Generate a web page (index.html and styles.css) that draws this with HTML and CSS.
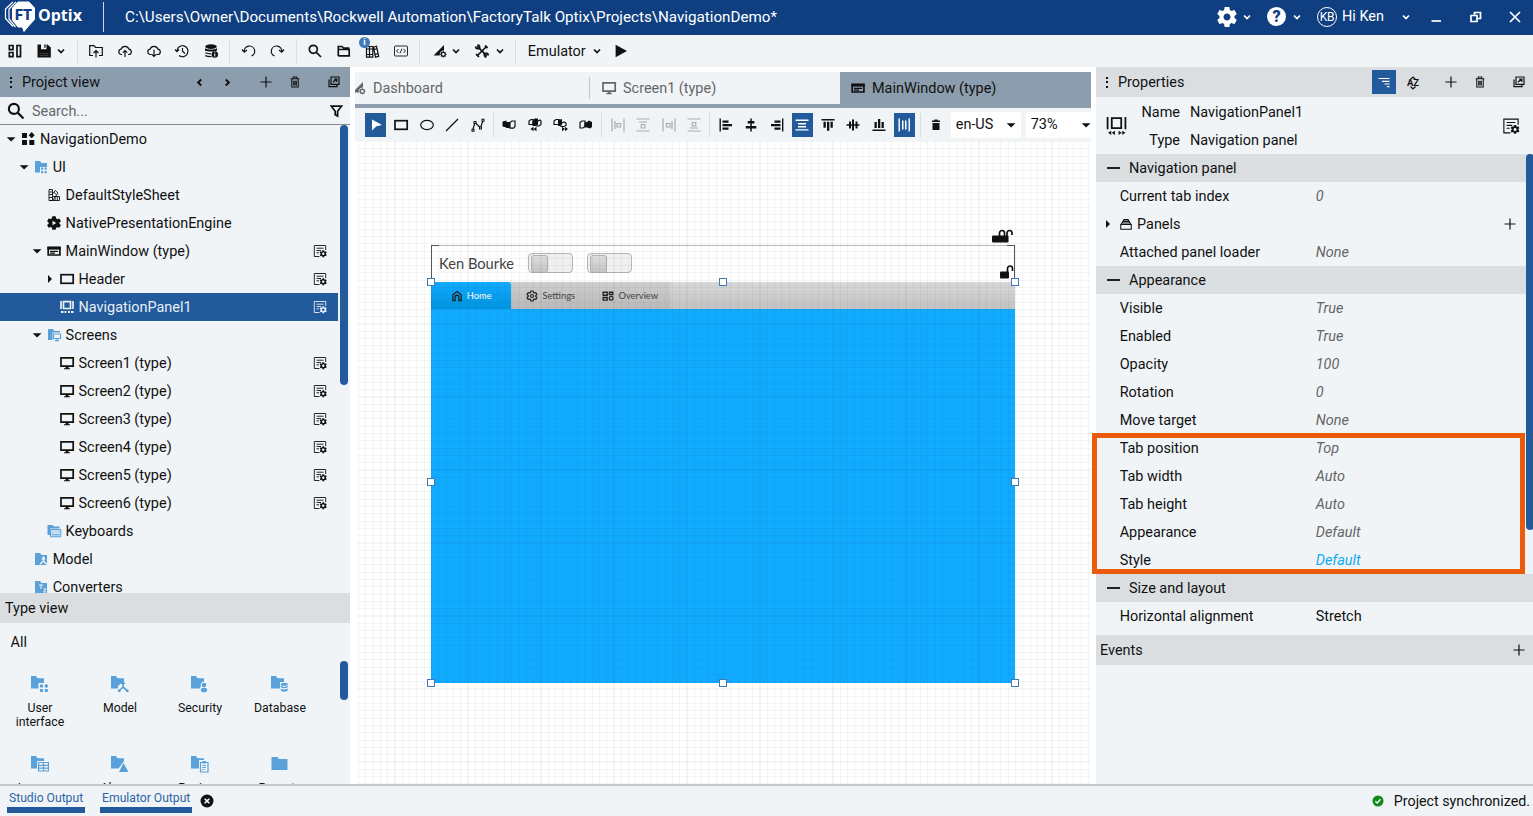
FILE: index.html
```html
<!DOCTYPE html>
<html lang="en">

<head>
  <meta charset="UTF-8" />
  <meta name="viewport" content="width=device-width, initial-scale=1.0" />
  <title>FactoryTalk Optix Studio</title>
  <link rel="stylesheet" href="styles.css">
</head>

<body>
  <!-- Icon sprite -->
  <svg class="sprite" xmlns="http://www.w3.org/2000/svg">
    <symbol id="chev" viewBox="0 0 8 8"><path class="ln2" d="M1 2.5L4 5.5L7 2.5" /></symbol>
    <symbol id="gear" viewBox="0 0 24 24"><path d="M19.43 12.98c.04-.32.07-.64.07-.98s-.03-.66-.07-.98l2.11-1.65c.19-.15.24-.42.12-.64l-2-3.46c-.12-.22-.39-.3-.61-.22l-2.49 1c-.52-.4-1.08-.73-1.69-.98l-.38-2.65C14.46 2.18 14.25 2 14 2h-4c-.25 0-.46.18-.49.42l-.38 2.65c-.61.25-1.17.59-1.69.98l-2.49-1c-.23-.09-.49 0-.61.22l-2 3.46c-.13.22-.07.49.12.64l2.11 1.65c-.04.32-.07.65-.07.98s.03.66.07.98l-2.11 1.65c-.19.15-.24.42-.12.64l2 3.46c.12.22.39.3.61.22l2.49-1c.52.4 1.08.73 1.69.98l.38 2.65c.03.24.24.42.49.42h4c.25 0 .46-.18.49-.42l.38-2.65c.61-.25 1.17-.59 1.69-.98l2.49 1c.23.09.49 0 .61-.22l2-3.46c.12-.22.07-.49-.12-.64l-2.11-1.65zM12 15.5c-1.93 0-3.5-1.57-3.5-3.5s1.57-3.5 3.5-3.5 3.5 1.57 3.5 3.5-1.57 3.5-3.5 3.5z" /></symbol>
    <symbol id="layout" viewBox="0 0 16 16"><path class="ln2" d="M2.3 2.5h3.7v4.2h-3.7zM2.3 9.5h3.7v4.2h-3.7zM10 2.5h3.5v11.2h-3.5z" /></symbol>
    <symbol id="save" viewBox="0 0 16 16"><path d="M1.5 1.5H5v4.7h5.500V1.500h1L14.800 4.500V14.500H1.500zM8.300 1.500h1.300v3.300H8.300z" /><path d="M3.500 10h9v.6h-9zM3.500 12h9v.6h-9z" fill="#666" /></symbol>
    <symbol id="folder-up" viewBox="0 0 16 16"><path class="ln" d="M5 12.500H1.700V2.700H6L7.500 4.500H14.300V12.500H11M8 14.500V7.500M5.500 10L8 7.500L10.500 10" /></symbol>
    <symbol id="cloud-up" viewBox="0 0 16 16"><path class="ln" d="M5 11.500H4A2.700 2.700 0 0 1 4 6.200A4.200 4.200 0 0 1 12 6.200A2.700 2.700 0 0 1 12.200 11.500H11M8 14V7.500M5.800 9.700L8 7.500L10.200 9.700" /></symbol>
    <symbol id="cloud-down" viewBox="0 0 16 16"><path class="ln" d="M5.500 11.500H4A2.700 2.700 0 0 1 4 6.200A4.200 4.200 0 0 1 12 6.200A2.700 2.700 0 0 1 12.200 11.500H10.500M8 6.800V13.500M5.800 11.300L8 13.500L10.200 11.300" /></symbol>
    <symbol id="history" viewBox="0 0 16 16"><path class="ln" d="M3 8A5.500 5.500 0 1 1 5 12.500M1 6.500L3 8.700L5 6.500M8.500 5V8.300L11 10.500" /></symbol>
    <symbol id="db-info" viewBox="0 0 16 16"><ellipse cx="8" cy="3.600" rx="5.800" ry="2.300" /><path d="M2 5.200C4 7 12 7 14 5.200V7.500C12 8.800 4 8.800 2 7.500z" /><path class="ln" d="M2.200 9.800C4 10.700 6 10.800 8 10.800M2.200 12.600C4 13.500 6 13.600 8.500 13.600" /><circle cx="11.800" cy="11.500" r="3.200" /><path d="M11.300 11h1v2.500h-1zM11.300 9.500h1v.9h-1z" fill="#fff" /></symbol>
    <symbol id="undo" viewBox="0 0 16 16"><path class="ln" d="M3.300 8.800A5.200 5.200 0 1 1 10.500 13M1 6.500L3.300 9.200L6 7" /></symbol>
    <symbol id="redo" viewBox="0 0 16 16"><path class="ln" d="M12.700 8.800A5.200 5.200 0 1 0 5.500 13M15 6.500L12.700 9.200L10 7" /></symbol>
    <symbol id="search" viewBox="0 0 16 16"><circle class="ln2" cx="6.300" cy="6.300" r="4" /><path class="ln2" d="M9.300 9.300L14 14" stroke-width="2" /></symbol>
    <symbol id="folder-open" viewBox="0 0 16 16"><path class="ln2" d="M2.300 12.500V3.500H6L7.500 5H12.500V6.500M2.300 13V6.500H13.200V12.800H2.300" /></symbol>
    <symbol id="library" viewBox="0 0 16 16"><path class="ln" d="M2.500 3.500h3v10.700h-3zM5.500 3.500h3.300v10.700H5.500zM9.500 4.200L12.500 3.300L14.700 13.300L11.500 14.200zM2.500 6h6.300M2.500 11.500h6.300M9.900 6.500l3.300-.8M11 11.500l3.300-.8" /></symbol>
    <symbol id="code" viewBox="0 0 16 16"><rect class="thin" x="1.500" y="3" width="13" height="10" rx="1" /><path class="thin" d="M5.500 6L3.500 8L5.500 10M10.500 6L12.500 8L10.500 10M9 5.700L7 10.300" /></symbol>
    <symbol id="pen-gear" viewBox="0 0 16 16"><path d="M1.500 12.500L12 2V7.500C9 7.500 7.500 9.500 7.700 12.500z" /><circle class="ln" cx="11.300" cy="11.300" r="2" /><path class="thin" d="M11.300 8v1.500M11.300 13v1.600M8 11.300h1.500M13 11.300h1.600M9 9l1 1M12.600 12.600l1 1M13.600 9l-1 1M10 12.600l-1 1" /></symbol>
    <symbol id="tools" viewBox="0 0 16 16"><path class="ln2" d="M3 3L12.800 12.800M13 3L3 13" stroke-width="2" /><path class="ln2" d="M1.600 3.500C1.600 6 4 6 5.500 5.500C6 4 5.500 2 3.500 1.800M14.300 12.500C14.300 10 12 10 10.500 10.500C10 12 10.500 14 12.500 14.200" /><path class="ln2" d="M11 2.500l2.500 2.700M2 11l3 3" /></symbol>
    <symbol id="play" viewBox="0 0 16 16"><path d="M2.600 1.800L14 8L2.600 14.200z" /></symbol>
    <symbol id="left" viewBox="0 0 8 8"><path class="ln2" d="M5.500 1.300L2.800 4L5.500 6.700" /></symbol>
    <symbol id="right" viewBox="0 0 8 8"><path class="ln2" d="M2.500 1.300L5.200 4L2.500 6.700" /></symbol>
    <symbol id="plus" viewBox="0 0 16 16"><path class="ln" d="M8 2.500V13.500M2.500 8H13.500" /></symbol>
    <symbol id="trash" viewBox="0 0 16 16"><path class="ln" d="M3 4.300H13M6 4V2.300H10V4M4.300 4.500V13.700H11.700V4.500M6.500 6.500V12M8 6.500V12M9.500 6.500V12" /></symbol>
    <symbol id="trash-full" viewBox="0 0 16 16"><path d="M4 3.500H6.500V2.500H9.500V3.500H12V5H4zM4.500 6H11.500V13H4.500z" /></symbol>
    <symbol id="popout" viewBox="0 0 16 16"><path class="ln" d="M5 3h8v7.300H5zM3 5.500V12.700H11V10.500" /><path class="ln" d="M7 8.300L10.500 5M8 5H10.800V8" /></symbol>
    <symbol id="funnel" viewBox="0 0 16 16"><path class="ln2" d="M3.300 3.200H13.500L9.600 8.200V13L7.200 11.800V8.200z" /></symbol>
    <symbol id="tri-down" viewBox="0 0 16 16"><path d="M3.700 6.200H12.500L8.100 10.500z" /></symbol>
    <symbol id="tri-right" viewBox="0 0 16 16"><path d="M6 4L10 8L6 12z" /></symbol>
    <symbol id="project" viewBox="0 0 16 16"><path d="M2 2h5v5H2zM2 9h5v5H2zM9.300 9h5v5h-5zM11.700 1L14.700 4.200L11.700 7.300L8.700 4.200z" /></symbol>
    <symbol id="f-ui" viewBox="0 0 16 16"><path d="M2 2h5l1.500 2H14v4H7v5.500H2z" /><path d="M8 8.500h2.200v2.200H8zM11.500 8.500h2.200v2.200h-2.200zM8 12h2.200v2.200H8zM11.500 12h2.200v2.200h-2.200z" /></symbol>
    <symbol id="sheet" viewBox="0 0 16 16"><path class="thin" d="M3 2.500h3.500V13.500H3zM6.500 9.500H13.500V13.500H3M3 5H6.500M3 7.500H6.500M3 10.500H6.500M6.500 7L9.300 3.500L12 6L7 13M9 9.500V13.500M11.300 9.500V13.500M8 5.500L10.500 7.500" /></symbol>
    <symbol id="engine" viewBox="0 0 24 24"><path fill-rule="evenodd" d="M9.500 2h5l.6 3 2 1.200 2.900-1.100 2.400 4.200-2.300 2v1.700l2.300 2-2.400 4.200-2.900-1-2 1.100-.6 2.900h-5l-.6-2.900-2-1.200-2.900 1.100L1.600 15l2.300-2v-1.700l-2.300-2L4 5.100l2.900 1 2-1.100zM9.800 8.500v7l5.500-3.500z" /></symbol>
    <symbol id="window" viewBox="0 0 16 16"><path class="ln2" d="M2.200 4.500h11.700v7.500H2.200z" /><path d="M1.400 3.600h13.300v3h-13.300z" /><path class="ln" d="M4 8.400h8M4 10.200h5" /></symbol>
    <symbol id="panel" viewBox="0 0 16 16"><rect class="ln2" x="2" y="3.700" width="12.200" height="8.600" /></symbol>
    <symbol id="nav" viewBox="0 0 20 20"><path class="ln2" d="M5.500 3h9v9.500H5.500zM1.500 2v11.500M18.500 2v11.500" /><path d="M5 15v4L2 17zM8.500 15v4L5.500 17zM12 15v4l3-2zM15.500 15v4l3-2z" /></symbol>
    <symbol id="nav-s" viewBox="0 0 16 16"><path class="ln2" d="M4.500 2.700h7v6.800h-7zM2 2v8M14 2v8" /><path d="M2 12h2.500v2H2zM5.500 12h2v2h-2zM9 12h2v2H9zM12 12h2.500v2H12z" /></symbol>
    <symbol id="monitor" viewBox="0 0 16 16"><path class="ln2" d="M2 2.800h12.200v8.400H2z" /><path d="M6.700 11.500h2.800v1.700H11v1H5v-1h1.700z" /></symbol>
    <symbol id="f-screens" viewBox="0 0 16 16"><path d="M2 2h5l1.500 2H14v1.500H6.500v7.500H2z" /><path class="ln" d="M7.500 7h7v4.500h-7zM9 13.700h4M11 12v2" /></symbol>
    <symbol id="f-keys" viewBox="0 0 16 16"><path d="M1.500 2h5L8 3.500h5.500v2H4V12H1.500z" /><path d="M4.500 6.500h10.300v7.300H4.500z" fill="#c1dcf2" stroke="#5ba1d9" /><path class="thin" d="M6 11.800h7.500" /></symbol>
    <symbol id="f-model" viewBox="0 0 16 16"><path d="M2 2h5l1.500 2H14v10H2z" /><path d="M10.500 7V10L7 13.300M10.500 10L14 13.500M8.800 8.500L10.500 6L12 8.500" fill="none" stroke="#f0f4f7" stroke-width="1.300" /></symbol>
    <symbol id="f-conv" viewBox="0 0 16 16"><path d="M2 2h5l1.500 2H14v10H2z" /><path d="M6 6H10M8 6V10M10.500 10H13L10.500 13H13" fill="none" stroke="#f0f4f7" /></symbol>
    <symbol id="form" viewBox="0 0 16 16"><path class="thin" d="M7.500 13.500H2.300V2.500H13.700V7M4.500 5.200H11.500M4.500 7.500H9M4.500 9.800H7" /><use href="#gear" x="7" y="6.500" width="8.500" height="8.500" /></symbol>
    <symbol id="t-ui" viewBox="0 0 20 20"><path d="M2 2h5l1.500 2.200H15V9H9.500v5.500H2z" /><path d="M11 10.500h3v3h-3zM11 15h3v3h-3zM15.800 15h3v3h-3zM17.300 9.800l2.200 2.200-2.200 2.200-2.200-2.200z" /></symbol>
    <symbol id="t-model" viewBox="0 0 20 20"><path d="M2 2h5l1.500 2.200H15V7L9 12v2.500H2z" /><path class="ln2" d="M14 8V13L10 17M14 13L18.500 17" /><path d="M11.500 10L14 6.500L16.500 10zM17 15.500h2.500V18H17zM9 15.500h2.500V18H9z" /></symbol>
    <symbol id="t-security" viewBox="0 0 20 20"><path d="M2 2h5l1.500 2.200H15V7.500a3.500 3.500 0 0 0-3 5L10.500 14.500H2z" /><circle cx="15" cy="11" r="2.300" /><ellipse cx="15" cy="16" rx="3.200" ry="2.300" /></symbol>
    <symbol id="t-db" viewBox="0 0 20 20"><path d="M2 2h5l1.500 2.200H15V8H11v6.500H2z" /><ellipse cx="15.300" cy="10.200" rx="3.500" ry="1.500" /><path d="M11.800 11.800q3.500 2.200 7 0v1.500q-3.500 2-7 0zM11.800 14.600q3.500 2 7 0v2q-3.500 2.400-7 0z" /></symbol>
    <symbol id="t-table" viewBox="0 0 20 20"><path d="M2 2h5l1.500 2.200H15V7H8v7.500H2z" /><path class="ln" d="M9.500 8.500h10v8.500h-10zM9.500 11.300h10M9.500 14.200h10M14.500 8.500v8.500" /></symbol>
    <symbol id="t-alarm" viewBox="0 0 20 20"><path d="M2 2h5l1.500 2.200H15V7.200L9.500 14.500H2zM14.500 9L19.500 18H10z" /></symbol>
    <symbol id="t-recipe" viewBox="0 0 20 20"><path d="M2 2h5l1.500 2.200H15V6H10v8.500H2z" /><path class="ln" d="M11.500 8.500h7.500v9.500h-7.500zM13.300 11.500H17M13.300 13.500H17M13.300 15.500H15.500" /><path d="M13.500 7h3.500v2.500h-3.500z" /></symbol>
    <symbol id="t-folder" viewBox="0 0 20 20"><path d="M2.500 3h6l1.500 2h8.500v11h-16z" /></symbol>
    <symbol id="cursor" viewBox="0 0 16 16"><path d="M4 2.500L14 8L8.500 9.200L4 13.500z" /></symbol>
    <symbol id="ellipse" viewBox="0 0 16 16"><ellipse class="ln" cx="8" cy="8" rx="6.300" ry="4.600" /></symbol>
    <symbol id="line" viewBox="0 0 16 16"><path class="ln" d="M2 14L14 2" /></symbol>
    <symbol id="poly" viewBox="0 0 16 16"><path class="ln" d="M2.700 13L5 5.500L10.500 11L13 3.200" /><path d="M3.500 4h3v3h-3zM9 9.500h3v3H9zM11.500 1.700h3v3h-3zM1.500 11.700h3v3h-3z" /><path d="M4.500 5h1v1h-1zM10 10.500h1v1h-1zM12.500 2.700h1v1h-1zM2.500 12.700h1v1h-1z" fill="#fff" /></symbol>
    <symbol id="ord1" viewBox="0 0 16 16"><path d="M1.500 4.500L5.500 3.500V10.500L1.500 9.500zM5 5h4v6H5z" /><path class="ln" d="M9 5.500l2-1.500h3v5.500l-1.500 1.700H9z" /></symbol>
    <symbol id="ord2" viewBox="0 0 16 16"><path class="ln" d="M2 4l2-1.500h2v5H2zM10 4.500l3-1.500 1 1v3.500l-2 1.500h-2z" /><path d="M5.500 4l2-2.500H11V7L9 9H5.500zM3.500 12l3-2.200v4.400zM6.500 12l3-2.200v4.400z" /></symbol>
    <symbol id="ord3" viewBox="0 0 16 16"><path class="ln" d="M2 4l2-1.500h3v5H2zM9 6.500l3-1.500 2 1v2.500l-2 1H9z" /><path d="M6 3l4-1v5L8 9H6zM10 9.800L13 12l-3 2.200zM13 9.800L16 12l-3 2.200z" /></symbol>
    <symbol id="ord4" viewBox="0 0 16 16"><path class="ln" d="M2 5.500l2-1.500h3v5.500l-2 1.500H2z" /><path d="M6.500 5.500L9 5l2-1.500 3 1.500v5l-2 1.500-3-1H6.500z" /></symbol>
    <symbol id="dis1" viewBox="0 0 16 16"><path class="ln" d="M2 1.500v13M14 1.500v13M5 4v8M7 6.500h3.500v3.500H7z" /></symbol>
    <symbol id="dis2" viewBox="0 0 16 16"><path class="ln" d="M1.500 2h13M1.500 14h13M4 5h8M6.300 7.500h3.500v3.500H6.300z" /></symbol>
    <symbol id="dis3" viewBox="0 0 16 16"><path class="ln" d="M2 1.500v13M14 1.500v13M11 4v8M5.500 6.500H9v3.500H5.500z" /></symbol>
    <symbol id="dis4" viewBox="0 0 16 16"><path class="ln" d="M1.500 2h13M1.500 14h13M4 11h8M6.300 5.500h3.500V9H6.300z" /></symbol>
    <symbol id="al-left" viewBox="0 0 16 16"><path d="M1.500 1.500h1.400v13H1.500zM4.500 3.500h6v2.300h-6zM4.500 7h9.500v2.300H4.500zM4.500 10.500h6v2.300h-6z" /></symbol>
    <symbol id="al-center" viewBox="0 0 16 16"><path d="M7.300 1.500h1.500v13H7.300zM4.700 4h6.700v2.500H4.700zM2.800 9h10.500v2.500H2.800z" /></symbol>
    <symbol id="al-right" viewBox="0 0 16 16"><path d="M13 1.500h1.400v13H13zM5.500 3.500h6v2.300h-6zM2 7h9.500v2.300H2zM5.500 10.500h6v2.300h-6z" /></symbol>
    <symbol id="al-hs" viewBox="0 0 16 16"><path d="M1.500 2.500h13v1.400h-13zM4 6h8v1.500H4zM4 9h8v1.500H4zM1.500 12.200h13v1.400h-13z" /></symbol>
    <symbol id="al-top" viewBox="0 0 16 16"><path d="M1.500 2h13v1.400h-13zM3.500 4.800h2.300v6H3.500zM7 4.800h2.300v9H7zM10.500 4.800h2.300v6h-2.300z" /></symbol>
    <symbol id="al-mid" viewBox="0 0 16 16"><path d="M1.500 7.300h13v1.500h-13zM4 4.500h2v7H4zM7 2.500h2v11H7zM10.500 4.500h2v7h-2z" /></symbol>
    <symbol id="al-bot" viewBox="0 0 16 16"><path d="M1.500 12.500h13v1.400h-13zM3.500 5h2.300v6H3.500zM7 2h2.300v9H7zM10.500 5h2.300v6h-2.300z" /></symbol>
    <symbol id="al-vs" viewBox="0 0 16 16"><path d="M2.500 1.500h1.400v13H2.500zM6 3.500h1.500v9H6zM9 3.500h1.500v9H9zM12.500 1.500h1.400v13h-1.400z" /></symbol>
    <symbol id="group" viewBox="0 0 16 16"><path class="ln" d="M2.500 4.500H13.500M6 7.300H13.500M8.500 10H13.500M11 12.700H13.500" /></symbol>
    <symbol id="sort-az" viewBox="0 0 16 16"><path class="ln" d="M5.500 4.500L8 2L10.500 4.500M5.500 11.500L8 14L10.500 11.500" /></symbol>
    <symbol id="stack" viewBox="0 0 16 16"><path class="ln" d="M2 8.500h12v5.500h-12zM2.500 8L4.500 5h7L13.500 8M4.500 5L5.700 3h4.600L11.500 5M3.500 6.800h9" /></symbol>
    <symbol id="home" viewBox="0 0 16 16"><path class="ln2" d="M2.500 14V6.500L8 2L13.500 6.500V14H10.500V9.500A2.500 2.500 0 0 0 5.500 9.500V14z" /></symbol>
    <symbol id="gear-o" viewBox="0 0 24 24"><path d="M19.430 12.980c.04-.32.07-.64.07-.98s-.03-.66-.07-.98l2.110-1.650c.19-.15.24-.42.12-.64l-2-3.460c-.12-.22-.39-.3-.61-.22l-2.490 1c-.52-.4-1.080-.73-1.690-.98l-.38-2.650C14.460 2.180 14.250 2 14 2h-4c-.25 0-.46.18-.49.42l-.38 2.650c-.61.25-1.170.59-1.690.98l-2.490-1c-.23-.09-.49 0-.61.22l-2 3.460c-.13.22-.07.49.12.64l2.110 1.650c-.04.32-.07.65-.07.98s.03.66.07.98l-2.110 1.650c-.19.15-.24.42-.12.64l2 3.460c.12.22.39.3.61.22l2.490-1c.52.4 1.080.73 1.690.98l.38 2.650c.03.24.24.42.49.42h4c.25 0 .46-.18.49-.42l.38-2.650c.61-.25 1.170-.59 1.690-.98l2.490 1c.23.09.49 0 .61-.22l2-3.460c.12-.22.07-.49-.12-.64z" fill="none" stroke="currentColor" stroke-width="2.400" /><circle cx="12" cy="12" r="3" fill="none" stroke="currentColor" stroke-width="2.400" /></symbol>
    <symbol id="overview" viewBox="0 0 16 16"><path class="ln2" d="M1.500 3h5.500v4H1.500zM1.500 10h5.500v3.500H1.500zM9.800 3h4.700v3H9.800z" /><circle class="ln2" cx="12.200" cy="11" r="2.500" /></symbol>
  </svg>

  <header class="titlebar">
    <svg class="logo" viewBox="0 0 32 33">
      <path d="M14 2H25L30.500 8V19.500L25 25.500L20 31.500L18.500 27H14L8.500 20V8z" fill="#fff" stroke="#fff" stroke-linejoin="round" />
      <path d="M9 2L1.500 9V18.500L9 26.500M12 2L5 9V19L11.500 27" fill="none" stroke="#fff" stroke-width="1.200" />
      <text x="11" y="20" class="logo-text" textLength="17" lengthAdjust="spacingAndGlyphs">FT</text>
    </svg>
    <span class="brand">Optix</span>
    <span class="path">C:\Users\Owner\Documents\Rockwell Automation\FactoryTalk Optix\Projects\NavigationDemo*</span>
    <div class="account">
      <svg class="i24"><use href="#gear" /></svg>
      <svg class="chev"><use href="#chev" /></svg>
      <span class="help">?</span>
      <svg class="chev"><use href="#chev" /></svg>
      <span class="avatar">KB</span>
      <span class="user">Hi Ken</span>
      <svg class="chev"><use href="#chev" /></svg>
      <svg class="win" viewBox="0 0 12 12"><path class="ln2" d="M1.500 10H11" stroke-width="2" /></svg>
      <svg class="win" viewBox="0 0 12 12"><path class="ln2" d="M1 4.500h6v6H1zM4.500 4V1.500h6v6H7.500" /></svg>
      <svg class="win" viewBox="0 0 12 12"><path class="ln2" d="M1 1L11 11M11 1L1 11" /></svg>
    </div>
  </header>

  <div class="toolbar">
    <span class="tool"><svg><use href="#layout" /></svg></span>
    <span class="tool"><svg><use href="#save" /></svg></span>
    <svg class="chev first"><use href="#chev" /></svg>
    <i class="sep"></i>
    <span class="tool"><svg><use href="#folder-up" /></svg></span>
    <span class="tool"><svg><use href="#cloud-up" /></svg></span>
    <span class="tool"><svg><use href="#cloud-down" /></svg></span>
    <span class="tool"><svg><use href="#history" /></svg></span>
    <span class="tool"><svg><use href="#db-info" /></svg></span>
    <i class="sep"></i>
    <span class="tool"><svg><use href="#undo" /></svg></span>
    <span class="tool"><svg><use href="#redo" /></svg></span>
    <i class="sep"></i>
    <span class="tool"><svg><use href="#search" /></svg></span>
    <span class="tool"><svg><use href="#folder-open" /></svg></span>
    <span class="tool"><svg><use href="#library" /></svg><b class="badge">i</b></span>
    <span class="tool"><svg><use href="#code" /></svg></span>
    <i class="sep"></i>
    <span class="tool pen"><svg><use href="#pen-gear" /></svg></span>
    <svg class="chev"><use href="#chev" /></svg>
    <span class="tool second"><svg><use href="#tools" /></svg></span>
    <svg class="chev second-chev"><use href="#chev" /></svg>
    <i class="sep last"></i>
    <span class="emulator">Emulator</span>
    <svg class="chev"><use href="#chev" /></svg>
    <svg class="play"><use href="#play" /></svg>
  </div>

  <main class="workspace">
    <section class="left">
      <div class="panel-head dark">
        <span class="dots"></span>
        <span class="title">Project view</span>
        <svg class="arrow"><use href="#left" /></svg>
        <svg class="arrow"><use href="#right" /></svg>
        <svg class="h-plus"><use href="#plus" /></svg>
        <svg class="h-trash"><use href="#trash" /></svg>
        <svg class="h-pop"><use href="#popout" /></svg>
      </div>
      <div class="search">
        <svg class="i20"><use href="#search" /></svg>
        <span>Search...</span>
        <svg><use href="#funnel" /></svg>
      </div>
      <div class="tree-wrap">
        <div class="tree">
          <div class="node"><svg><use href="#tri-down" /></svg><svg><use href="#project" /></svg>NavigationDemo</div>
          <div class="node l1"><svg><use href="#tri-down" /></svg><svg class="blue"><use href="#f-ui" /></svg>UI</div>
          <div class="node l2"><svg></svg><svg><use href="#sheet" /></svg>DefaultStyleSheet</div>
          <div class="node l2"><svg></svg><svg><use href="#engine" /></svg>NativePresentationEngine</div>
          <div class="node l2"><svg><use href="#tri-down" /></svg><svg><use href="#window" /></svg>MainWindow (type)<svg class="form"><use href="#form" /></svg></div>
          <div class="node l3"><svg><use href="#tri-right" /></svg><svg><use href="#panel" /></svg>Header<svg class="form"><use href="#form" /></svg></div>
          <div class="node l3 selected"><svg></svg><svg><use href="#nav-s" /></svg>NavigationPanel1<svg class="form"><use href="#form" /></svg></div>
          <div class="node l2"><svg><use href="#tri-down" /></svg><svg class="blue"><use href="#f-screens" /></svg>Screens</div>
          <div class="node l3"><svg></svg><svg><use href="#monitor" /></svg>Screen1 (type)<svg class="form"><use href="#form" /></svg></div>
          <div class="node l3"><svg></svg><svg><use href="#monitor" /></svg>Screen2 (type)<svg class="form"><use href="#form" /></svg></div>
          <div class="node l3"><svg></svg><svg><use href="#monitor" /></svg>Screen3 (type)<svg class="form"><use href="#form" /></svg></div>
          <div class="node l3"><svg></svg><svg><use href="#monitor" /></svg>Screen4 (type)<svg class="form"><use href="#form" /></svg></div>
          <div class="node l3"><svg></svg><svg><use href="#monitor" /></svg>Screen5 (type)<svg class="form"><use href="#form" /></svg></div>
          <div class="node l3"><svg></svg><svg><use href="#monitor" /></svg>Screen6 (type)<svg class="form"><use href="#form" /></svg></div>
          <div class="node l2"><svg></svg><svg class="blue"><use href="#f-keys" /></svg>Keyboards</div>
          <div class="node l1"><svg></svg><svg class="blue"><use href="#f-model" /></svg>Model</div>
          <div class="node l1"><svg></svg><svg class="blue"><use href="#f-conv" /></svg>Converters</div>
        </div>
        <div class="thumb tree-thumb"></div>
      </div>
      <div class="panel-head type-head">Type view</div>
      <div class="all">All</div>
      <div class="types-wrap">
        <div class="types">
          <div class="type"><svg><use href="#t-ui" /></svg>User<br>interface</div>
          <div class="type"><svg><use href="#t-model" /></svg>Model</div>
          <div class="type"><svg><use href="#t-security" /></svg>Security</div>
          <div class="type"><svg><use href="#t-db" /></svg>Database</div>
          <div class="type"><svg><use href="#t-table" /></svg>Loggers</div>
          <div class="type"><svg><use href="#t-alarm" /></svg>Alarms</div>
          <div class="type"><svg><use href="#t-recipe" /></svg>Recipes</div>
          <div class="type"><svg><use href="#t-folder" /></svg>Reports</div>
        </div>
        <div class="thumb type-thumb"></div>
      </div>
    </section>

    <section class="center">
      <div class="tabs">
        <div class="tab tab-first"><svg><use href="#pen-gear" /></svg>Dashboard</div>
        <div class="tab tab-second"><svg><use href="#monitor" /></svg>Screen1 (type)</div>
        <div class="tab tab-active"><svg><use href="#window" /></svg>MainWindow (type)</div>
      </div>
      <div class="design-bar">
        <span class="d on"><svg><use href="#cursor" /></svg></span>
        <span class="d"><svg><use href="#panel" /></svg></span>
        <span class="d"><svg><use href="#ellipse" /></svg></span>
        <span class="d"><svg><use href="#line" /></svg></span>
        <span class="d"><svg><use href="#poly" /></svg></span>
        <i></i>
        <span class="d"><svg><use href="#ord1" /></svg></span>
        <span class="d"><svg><use href="#ord2" /></svg></span>
        <span class="d"><svg><use href="#ord3" /></svg></span>
        <span class="d"><svg><use href="#ord4" /></svg></span>
        <i></i>
        <span class="d off"><svg><use href="#dis1" /></svg></span>
        <span class="d off"><svg><use href="#dis2" /></svg></span>
        <span class="d off"><svg><use href="#dis3" /></svg></span>
        <span class="d off"><svg><use href="#dis4" /></svg></span>
        <i></i>
        <span class="d"><svg><use href="#al-left" /></svg></span>
        <span class="d"><svg><use href="#al-center" /></svg></span>
        <span class="d"><svg><use href="#al-right" /></svg></span>
        <span class="d on"><svg><use href="#al-hs" /></svg></span>
        <span class="d"><svg><use href="#al-top" /></svg></span>
        <span class="d"><svg><use href="#al-mid" /></svg></span>
        <span class="d"><svg><use href="#al-bot" /></svg></span>
        <span class="d on"><svg><use href="#al-vs" /></svg></span>
        <i></i>
        <span class="d"><svg><use href="#trash-full" /></svg></span>
        <span class="select locale">en-US<svg><use href="#tri-down" /></svg></span>
        <span class="select zoom">73%<svg><use href="#tri-down" /></svg></span>
      </div>
      <div class="canvas">
        <div class="window">
          <div class="w-header">
            <span class="w-name">Ken Bourke</span>
            <span class="switch"></span>
            <span class="switch"></span>
          </div>
          <div class="w-tabs">
            <div class="w-tab active"><svg><use href="#home" /></svg>Home</div>
            <div class="w-tab"><svg><use href="#gear-o" /></svg>Settings</div>
            <div class="w-tab"><svg><use href="#overview" /></svg>Overview</div>
          </div>
          <div class="w-body"></div>
        </div>
        <div class="grid"></div>
        <div class="bracket start"></div>
        <div class="bracket end"></div>
        <svg class="lock lock-top" viewBox="0 0 22 14"><rect y="6.500" width="16.500" height="7" rx="1" /><path class="ln2" d="M7.500 7V4A2.500 2.500 0 0 1 12.500 4V7M15 7V4A2.500 2.500 0 0 1 20 4V6" /></svg>
        <svg class="lock lock-low" viewBox="0 0 14 14"><rect y="6.500" width="9" height="7" rx="1" /><path class="ln2" d="M7.500 7V3.500A2.500 2.500 0 0 1 12.500 3.500V6" /></svg>
        <b class="handle x0 y0"></b><b class="handle x1 y0"></b><b class="handle x2 y0"></b>
        <b class="handle x0 y1"></b><b class="handle x2 y1"></b>
        <b class="handle x0 y2"></b><b class="handle x1 y2"></b><b class="handle x2 y2"></b>
      </div>
    </section>

    <section class="right">
      <div class="panel-head">
        <span class="dots"></span>
        <span class="title">Properties</span>
        <span class="sort"><svg><use href="#group" /></svg></span>
        <span class="az">AZ<svg><use href="#sort-az" /></svg></span>
        <svg class="h-plus"><use href="#plus" /></svg>
        <svg class="h-trash"><use href="#trash" /></svg>
        <svg class="h-pop"><use href="#popout" /></svg>
      </div>
      <div class="object">
        <svg class="nav-icon"><use href="#nav" /></svg>
        <div class="fields">
          <span class="key">Name</span><span>NavigationPanel1</span>
          <span class="key">Type</span><span>Navigation panel</span>
        </div>
        <svg class="i20"><use href="#form" /></svg>
      </div>
      <div class="props">
        <div class="group">Navigation panel</div>
        <div class="prop"><span>Current tab index</span><em>0</em></div>
        <div class="prop expand"><svg><use href="#tri-right" /></svg><svg><use href="#stack" /></svg><span>Panels</span><svg class="add"><use href="#plus" /></svg></div>
        <div class="prop"><span>Attached panel loader</span><em>None</em></div>
        <div class="group">Appearance</div>
        <div class="prop"><span>Visible</span><em>True</em></div>
        <div class="prop"><span>Enabled</span><em>True</em></div>
        <div class="prop"><span>Opacity</span><em>100</em></div>
        <div class="prop"><span>Rotation</span><em>0</em></div>
        <div class="prop"><span>Move target</span><em>None</em></div>
        <div class="prop"><span>Tab position</span><em>Top</em></div>
        <div class="prop"><span>Tab width</span><em>Auto</em></div>
        <div class="prop"><span>Tab height</span><em>Auto</em></div>
        <div class="prop"><span>Appearance</span><em>Default</em></div>
        <div class="prop"><span>Style</span><em class="link">Default</em></div>
        <div class="group">Size and layout</div>
        <div class="prop"><span>Horizontal alignment</span><span>Stretch</span></div>
        <div class="prop-thumb"></div>
        <div class="highlight"></div>
      </div>
      <div class="panel-head events">Events<svg><use href="#plus" /></svg></div>
    </section>
  </main>

  <footer class="statusbar">
    <span class="output">Studio Output</span>
    <span class="output">Emulator Output</span>
    <svg class="close" viewBox="0 0 14 14"><circle cx="7" cy="7" r="6.500" /><path d="M4.700 4.700L9.300 9.300M9.300 4.700L4.700 9.300" stroke="#fff" stroke-width="1.600" /></svg>
    <svg class="ok" viewBox="0 0 12 12"><circle cx="6" cy="6" r="5.500" fill="#12891c" /><path d="M3.300 6.200L5.200 8L8.500 4.200" fill="none" stroke="#fff" stroke-width="1.300" /></svg>
    <span class="status">Project synchronized.</span>
  </footer>
</body>

</html>
```
FILE: styles.css
```css
* {
  box-sizing: border-box;
}

body {
  margin: 0;
  width: 1533px;
  height: 816px;
  overflow: hidden;
  display: flex;
  flex-direction: column;
  background: #f0f4f7;
  color: #111;
  font-family: Roboto, "Liberation Sans", sans-serif;
  font-size: 14.45px;
  white-space: nowrap;
}

svg {
  width: 16px;
  height: 16px;
  flex: none;
  fill: currentColor;
}

.sprite {
  position: absolute;
  width: 0;
  height: 0;
}

.ln,
.ln2,
.thin {
  fill: none;
  stroke: currentColor;
  stroke-width: 1.2;
}

.ln2 {
  stroke-width: 1.7;
}

.thin {
  stroke-width: 0.9;
}

.chev {
  width: 8px;
  height: 8px;
}

.i20 {
  width: 20px;
  height: 20px;
}

/* Title bar */
.titlebar {
  height: 35px;
  flex: none;
  display: flex;
  align-items: center;
  background: #0f3f80;
  color: #fff;
  padding: 0 0 2px 4px;
}

.logo {
  width: 32px;
  height: 33px;
}

.logo-text {
  font-size: 15px;
  font-weight: 900;
  fill: #0f3f80;
}

.brand {
  width: 65px;
  margin-left: 2px;
  padding-bottom: 3px;
  font-family: "Open Sans", sans-serif;
  font-size: 16px;
  font-weight: 700;
  line-height: 26px;
}

.path {
  border-left: 1px solid #cfd9e6;
  padding-left: 21px;
  font-size: 15.2px;
  line-height: 30px;
}

.account {
  display: flex;
  align-items: center;
  margin-left: auto;
  margin-right: 12px;
}

.i24 {
  width: 24px;
  height: 24px;
  margin-right: 4px;
}

.help {
  width: 19px;
  height: 19px;
  margin: 0 7px 0 16px;
  border-radius: 50%;
  background: #fff;
  color: #0f3f80;
  font-size: 16px;
  font-weight: 900;
  line-height: 19px;
  text-align: center;
}

.avatar {
  width: 20px;
  height: 20px;
  margin: 0 5px 0 16px;
  border: 1px solid #fff;
  border-radius: 50%;
  font-size: 12px;
  letter-spacing: -0.3px;
  line-height: 18px;
  text-align: center;
}

.user {
  width: 42px;
  margin-right: 18px;
}

.win {
  width: 12px;
  height: 12px;
  margin-left: 27.5px;
}

.chev + .win {
  margin-left: 20px;
}

/* Main toolbar */
.toolbar {
  height: 32px;
  flex: none;
  display: flex;
  align-items: center;
  padding-left: 1px;
}

.tool {
  position: relative;
  width: 28.7px;
  flex: none;
  display: flex;
  justify-content: center;
}

.toolbar .chev {
  margin-left: -2px;
}

.toolbar .chev.first {
  margin: 0 7.5px 0 -1px;
}

.tool.pen {
  margin-left: 1px;
}

.tool.second {
  margin-left: 8px;
}

.toolbar .chev.second-chev {
  margin-left: -1px;
}

.sep {
  width: 1px;
  height: 25px;
  flex: none;
  margin: 0 4px;
  background: #d9dde1;
}

.sep.last {
  margin: 0 12px 0 11px;
}

.toolbar .emulator + .chev {
  margin-left: 7.5px;
}

.play {
  margin-left: 12px;
}

.badge {
  position: absolute;
  left: 1px;
  top: -6px;
  width: 11px;
  height: 11px;
  border-radius: 50%;
  background: #3f7ab8;
  color: #fff;
  font-size: 9px;
  line-height: 11px;
  text-align: center;
}

.workspace {
  height: 717px;
  flex: none;
  display: flex;
  background: #fff;
}

.left {
  width: 350px;
  display: flex;
  flex-direction: column;
  background: #f0f4f7;
}

.panel-head {
  height: 30px;
  flex: none;
  display: flex;
  align-items: center;
  background: #dadee1;
}

.panel-head.dark {
  background: #8c9dad;
}

.dots {
  width: 2px;
  height: 11px;
  margin: 0 10px 0 10px;
  background: repeating-linear-gradient(#111 0 2px, transparent 2px 4.5px);
}

.title {
  margin-right: auto;
}

.arrow {
  width: 9px;
  height: 9px;
  margin-right: 19px;
}

.h-plus {
  margin-left: 7px;
}

.h-trash {
  width: 14px;
  margin: 0 22.5px 0 14px;
}

.h-pop {
  margin-right: 6.5px;
  margin-left: 1px;
}

.dark .h-pop {
  margin-right: 8.5px;
}

.search {
  height: 28px;
  flex: none;
  display: flex;
  align-items: center;
  gap: 6px;
  padding: 0 6px;
  border-bottom: 1px solid #85898c;
  color: #111;
}

.search span {
  flex: 1;
  padding-top: 2px;
  color: #666;
}

.tree-wrap {
  height: 468px;
  flex: none;
  display: flex;
  overflow: hidden;
}

.tree {
  width: 338px;
}

.node {
  height: 28px;
  display: flex;
  align-items: center;
  padding-left: 3px;
}

.node svg:nth-child(2) {
  margin: 0 4px 0 1px;
}

.l1 {
  padding-left: 15.7px;
}

.l2 {
  padding-left: 28.6px;
}

.l3 {
  padding-left: 41.5px;
}

.node.selected {
  background: #225a9c;
  color: #e8eff7;
}

.node .form {
  margin-left: auto;
  margin-right: 10px;
}

.blue {
  color: #5ba1d9;
}

.thumb {
  width: 8px;
  margin-left: 2px;
  border-radius: 4px;
  background: #225a9c;
}

.tree-thumb {
  height: 260px;
}

.type-head {
  padding-left: 5px;
}

.all {
  padding: 11px 10.5px 0;
  line-height: 18px;
}

.types-wrap {
  height: 132px;
  display: flex;
  overflow: hidden;
}

.types {
  width: 338px;
  display: grid;
  grid-template-columns: repeat(4, 80px);
  grid-auto-rows: 80px;
  padding-top: 22px;
}

.type {
  display: flex;
  flex-direction: column;
  align-items: center;
  font-size: 12.3px;
  line-height: 14px;
  text-align: center;
}

.type svg {
  width: 20px;
  height: 20px;
  margin-bottom: 7px;
  margin-right: 2px;
  color: #5ba1d9;
}

.type-thumb {
  height: 39px;
  margin-top: 9px;
}

/* Editor */
.center {
  width: 736px;
  margin: 5px 5px 0;
  display: flex;
  flex-direction: column;
}

.tabs {
  height: 36px;
  flex: none;
  display: flex;
  overflow: hidden;
  background: #f0f4f7;
  border-bottom: 4px solid #8c9dad;
  color: #666;
}

.tab {
  display: flex;
  align-items: center;
}

.tab svg {
  margin-right: 6px;
}

.tab-first {
  width: 235px;
  margin: 5px 0 5px;
  border-right: 1px solid #c3c7ca;
}

.tab-first svg {
  margin-left: -4px;
}

.tab-second {
  width: 250px;
  padding-left: 11px;
}

.tab-active {
  flex: 1;
  padding-left: 10px;
  background: #8c9dad;
  color: #111;
}

.design-bar {
  height: 33px;
  flex: none;
  display: flex;
  align-items: center;
  padding-left: 8px;
  background: #f0f4f7;
  overflow: hidden;
}

.d {
  width: 21px;
  height: 24px;
  margin: 0 2.25px;
  flex: none;
  display: flex;
  align-items: center;
  justify-content: center;
}

.d.on {
  background: #225a9c;
  color: #fff;
}

.d.off {
  color: #a8abae;
}

.design-bar i {
  width: 1px;
  height: 24px;
  flex: none;
  margin: 0 2.6px;
  background: #d9dde1;
}

.select {
  height: 26px;
  flex: none;
  display: flex;
  align-items: center;
  justify-content: space-between;
  padding-left: 5px;
  border-radius: 2px;
  background: #fff;
}

.locale {
  width: 70px;
  margin-left: 2px;
  padding-right: 2px;
}

.zoom {
  width: 68px;
  margin-left: 5px;
}

.canvas {
  position: relative;
  flex: 1;
  overflow: hidden;
}

.grid {
  position: absolute;
  inset: 0 0 0 3px;
  background:
    repeating-linear-gradient(90deg, rgba(40, 50, 60, 0.05) 0 1px, transparent 1px 7.3px),
    repeating-linear-gradient(rgba(40, 50, 60, 0.05) 0 1px, transparent 1px 7.3px);
}

.window {
  position: absolute;
  left: 76px;
  top: 104px;
  width: 584px;
  height: 438px;
  display: flex;
  flex-direction: column;
  font-family: Lato, sans-serif;
}

.w-header {
  height: 37px;
  display: flex;
  align-items: center;
  border-top: 1px solid #bbb;
  padding: 0 0 2px 8px;
}

.w-name {
  width: 89px;
  color: #444;
  font-size: 14.7px;
}

.switch {
  width: 45px;
  height: 20px;
  margin-right: 13.5px;
  padding: 1px 2px;
  border: 1px solid #b5b5b5;
  border-radius: 4px;
  background: #f0f0f0;
}

.switch::before {
  content: "";
  display: block;
  width: 15px;
  height: 16px;
  border: 1px solid #b0b0b0;
  border-radius: 3px;
  background: linear-gradient(#ddd, #c4c4c4);
}

.w-tabs {
  height: 27px;
  display: flex;
  background: linear-gradient(#d8d8d8, #c2c2c2);
}

.w-tab {
  width: 79.5px;
  display: flex;
  align-items: center;
  justify-content: center;
  gap: 4px;
  padding-left: 1px;
  background: linear-gradient(#cecece, #b9b9b9);
  color: #444;
  font-size: 9.3px;
}

.w-tab svg {
  width: 12px;
  height: 12px;
  color: #222;
}

.w-tab.active {
  border-radius: 3px 3px 0 0;
  background: linear-gradient(#10aaff, #0094e0);
  color: #fff;
}

.w-body {
  flex: 1;
  background: #10aaff;
}

.bracket {
  position: absolute;
  top: 104px;
  width: 8px;
  height: 37px;
  border-top: 1px solid #555;
}

.bracket.start {
  left: 76px;
  border-left: 1px solid #555;
}

.bracket.end {
  left: 652px;
  border-right: 1px solid #555;
}

.lock {
  position: absolute;
  height: 14px;
}

.lock-top {
  left: 637px;
  top: 88px;
  width: 22px;
}

.lock-low {
  left: 645px;
  top: 124px;
  width: 14px;
}

.handle {
  position: absolute;
  width: 8px;
  height: 8px;
  border: 1px solid #3f78b5;
  background: #fff;
}

.x0 { left: 72px; }
.x1 { left: 364px; }
.x2 { left: 656px; }
.y0 { top: 137px; }
.y1 { top: 337px; }
.y2 { top: 538px; }

/* Properties */
.right {
  width: 437px;
  display: flex;
  flex-direction: column;
  background: #f0f4f7;
}

.sort {
  width: 24px;
  height: 24px;
  padding: 4px;
  background: #225a9c;
  color: #fff;
}

.sort svg {
  display: block;
}

.az {
  position: relative;
  width: 14px;
  margin: 0 16px 0 10px;
  font-size: 9.5px;
  font-weight: 700;
  text-align: center;
}

.az svg {
  position: absolute;
  left: -1px;
  top: -2px;
}

.object {
  height: 57px;
  flex: none;
  display: flex;
  align-items: center;
  padding: 0 12px 0 10px;
}

.nav-icon {
  width: 21px;
  height: 21px;
}

.fields {
  display: grid;
  grid-template-columns: 53px 1fr;
  grid-auto-rows: 28px;
  column-gap: 10px;
  flex: 1;
  line-height: 30px;
}

.key {
  text-align: right;
}

.props {
  position: relative;
  height: 481px;
  flex: none;
}

.group {
  height: 28px;
  display: flex;
  align-items: center;
  padding-left: 11px;
  background: #dadee1;
}

.group::before {
  content: "";
  width: 13px;
  height: 2px;
  margin-right: 9px;
  background: #222;
}

.prop {
  height: 28px;
  display: grid;
  grid-template-columns: 196px 1fr;
  align-items: center;
  padding-left: 23.7px;
}

.prop em {
  color: #666;
}

.prop em.link {
  color: #10aaef;
}

.prop.expand {
  display: flex;
  padding-left: 4px;
}

.expand svg:nth-child(2) {
  width: 14px;
  height: 14px;
  margin: 0 4px 0 3px;
}

.prop .add {
  margin-left: auto;
  margin-right: 15px;
}

.prop-thumb {
  position: absolute;
  left: 430px;
  top: 0;
  width: 8px;
  height: 376px;
  border-radius: 4px;
  background: #225a9c;
}

.highlight {
  position: absolute;
  left: -4px;
  top: 279px;
  width: 433px;
  height: 141px;
  border: 5px solid #ec5b0c;
}

.events {
  padding-left: 4px;
}

.events svg {
  margin-left: auto;
  margin-right: 6.5px;
}

/* Status bar */
.statusbar {
  height: 32px;
  flex: none;
  display: flex;
  align-items: center;
  padding: 0 3px 0 7px;
  border-top: 2px solid #c3c7ca;
}

.output {
  padding: 0 2px;
  margin-right: 15px;
  border-bottom: 6px solid #225a9c;
  color: #2c64a5;
  font-size: 12.15px;
  line-height: 18px;
}

.close {
  width: 14px;
  height: 14px;
  margin-left: -7px;
}

.ok {
  width: 12px;
  height: 12px;
  margin-left: auto;
  margin-right: 10px;
}

.status {
  font-size: 14.25px;
}
```
